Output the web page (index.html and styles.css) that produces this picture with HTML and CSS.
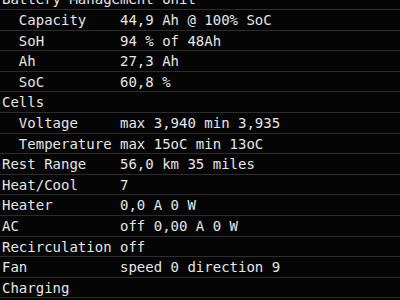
FILE: index.html
```html
<!DOCTYPE html>
<html>
<head>
<meta charset="utf-8">
<link rel="stylesheet" href="styles.css">
</head>
<body>
<div class="list">
  <div class="row"><span class="label">Battery Management Unit</span></div>
  <div class="row"><span class="label sub">Capacity</span><span class="value">44,9 Ah @ 100% SoC</span></div>
  <div class="row"><span class="label sub">SoH</span><span class="value">94 % of 48Ah</span></div>
  <div class="row"><span class="label sub">Ah</span><span class="value">27,3 Ah</span></div>
  <div class="row"><span class="label sub">SoC</span><span class="value">60,8 %</span></div>
  <div class="row"><span class="label">Cells</span></div>
  <div class="row"><span class="label sub">Voltage</span><span class="value">max 3,940 min 3,935</span></div>
  <div class="row"><span class="label sub">Temperature</span><span class="value">max 15oC min 13oC</span></div>
  <div class="row"><span class="label">Rest Range</span><span class="value">56,0 km 35 miles</span></div>
  <div class="row"><span class="label">Heat/Cool</span><span class="value">7</span></div>
  <div class="row"><span class="label">Heater</span><span class="value">0,0 A 0 W</span></div>
  <div class="row"><span class="label">AC</span><span class="value">off 0,00 A 0 W</span></div>
  <div class="row"><span class="label">Recirculation</span><span class="value">off</span></div>
  <div class="row"><span class="label">Fan</span><span class="value">speed 0 direction 9</span></div>
  <div class="row"><span class="label">Charging</span></div>
</div>
</body>
</html>
```
FILE: styles.css
```css
html, body {
  margin: 0;
  padding: 0;
  background: #050505;
  overflow: hidden;
}
.list {
  margin-top: -10.6px;
  font-family: "DejaVu Sans Mono", monospace;
  font-size: 14px;
  color: #e6e6e6;
}
.row {
  display: flex;
  height: 19.6px;
  line-height: 17.6px;
  padding-top: 2px;
  box-sizing: border-box;
  border-bottom: 1px solid #2c2c2c;
  height: 20.6px;
  padding-left: 2px;
  white-space: pre;
}
.label {
  width: 14ch;
  flex: none;
}
.label.sub {
  padding-left: 2ch;
  box-sizing: border-box;
}
.row > .label:only-child {
  width: auto;
}
.value {
  flex: none;
}
```
